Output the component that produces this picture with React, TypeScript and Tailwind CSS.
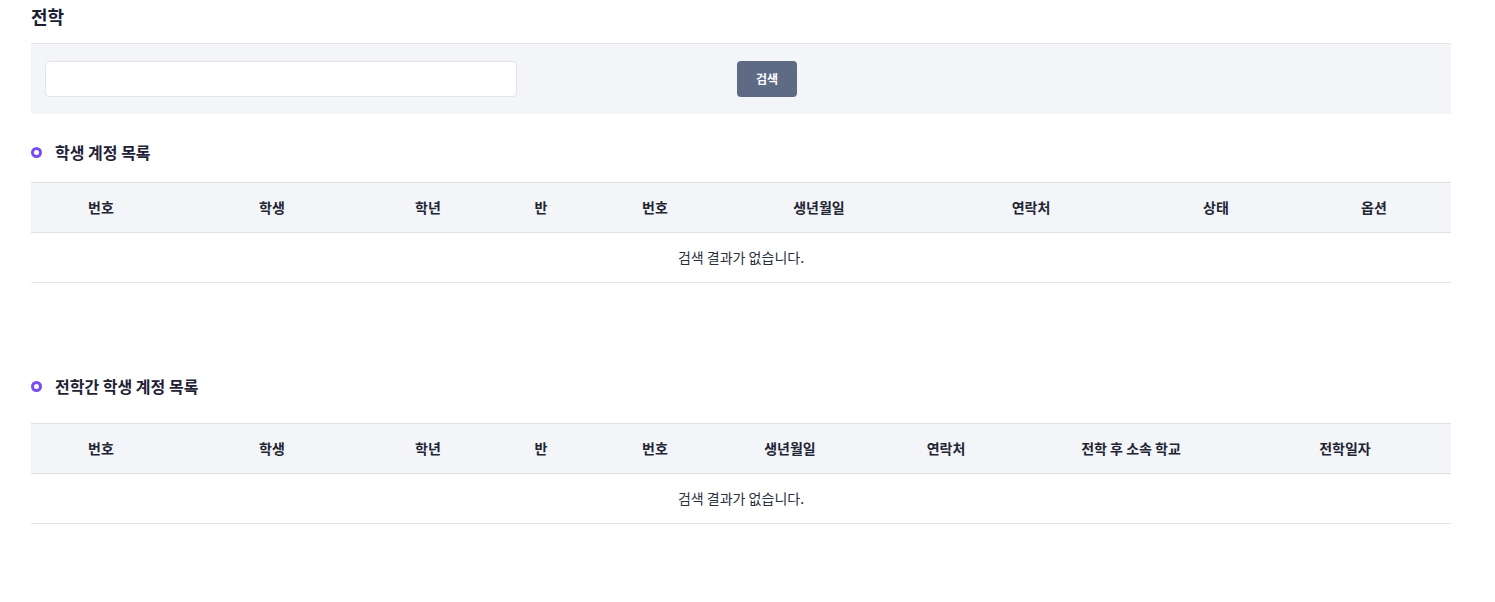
import React from 'react';

type Column = { label: string };

const FONT = { fontFamily: '"Noto Sans CJK KR", "Noto Sans", sans-serif' };

const studentColumns: Column[] = [
  { label: '번호' },
  { label: '학생' },
  { label: '학년' },
  { label: '반' },
  { label: '번호' },
  { label: '생년월일' },
  { label: '연락처' },
  { label: '상태' },
  { label: '옵션' },
];

const transferColumns: Column[] = [
  { label: '번호' },
  { label: '학생' },
  { label: '학년' },
  { label: '반' },
  { label: '번호' },
  { label: '생년월일' },
  { label: '연락처' },
  { label: '전학 후 소속 학교' },
  { label: '전학일자' },
];

const SectionTitle: React.FC<{ title: string; className?: string }> = ({ title, className }) => (
  <div className={`flex items-center h-[24px] ${className ?? ''}`}>
    <span className="w-[11px] h-[11px] rounded-full border-[3px] border-[#7b4cf2]" />
    <h2 className="ml-[13px] text-[16px] font-bold text-[#1f2236]">{title}</h2>
  </div>
);

const EmptyTable: React.FC<{ columns: Column[]; gridClass: string; className?: string }> = ({ columns, gridClass, className }) => (
  <div className={className}>
    <div className={`grid ${gridClass} h-[51px] bg-[#f4f5f9] border-t border-b border-[#dfe0e6]`}>
      {columns.map((col, i) => (
        <div key={i} className="flex items-center justify-center text-[14px] font-semibold text-[#222533]">
          {col.label}
        </div>
      ))}
    </div>
    <div className="h-[50px] flex items-center justify-center border-b border-[#e3e4e8] text-[14px] text-[#2b2e3c]">
      검색 결과가 없습니다.
    </div>
  </div>
);

export default function App() {
  return (
    <div className="min-h-screen bg-white" style={FONT}>
      <div className="ml-[31px] w-[1420px]">
        <div className="h-[43px] pt-[3px]">
          <h1 className="text-[18px] leading-[26px] font-bold text-[#1c2033]">전학</h1>
        </div>

        <div className="h-[71px] bg-[#f4f5f9] border-t border-[#e4e5ea] px-[14px] flex items-center">
          <input
            type="text"
            className="w-[472px] h-[36px] bg-white border border-[#e2e4e9] rounded-[4px] px-3 text-[13px] outline-none"
          />
          <button className="ml-[220px] w-[60px] h-[36px] rounded-[4px] bg-[#5f6a85] text-white text-[12px] font-bold">
            검색
          </button>
        </div>

        <SectionTitle title="학생 계정 목록" className="mt-[26px]" />
        <EmptyTable
          className="mt-[18px]"
          columns={studentColumns}
          gridClass="grid-cols-[140px_202px_110px_116px_112px_216px_208px_162px_154px]"
        />

        <SectionTitle title="전학간 학생 계정 목록" className="mt-[91px]" />
        <EmptyTable
          className="mt-[25px]"
          columns={transferColumns}
          gridClass="grid-cols-[140px_202px_110px_116px_112px_158px_154px_216px_212px]"
        />
      </div>
    </div>
  );
}
